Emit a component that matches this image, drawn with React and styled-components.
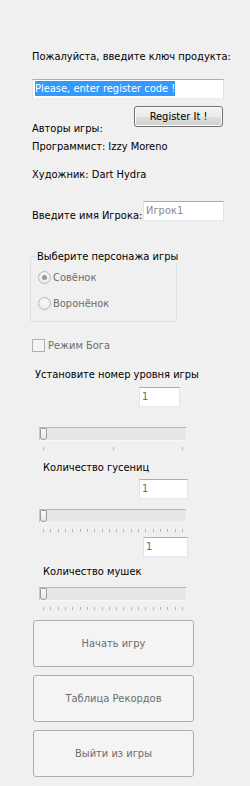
import React from 'react';
import styled, { createGlobalStyle } from 'styled-components';

const GlobalStyle = createGlobalStyle`
    html, body {
        margin: 0;
        padding: 0;
        background: #f0f0f0;
    }
    * {
        box-sizing: border-box;
    }
`;

const px = (v) => (typeof v === 'number' ? `${v}px` : v || 0);

const Form = styled.div`
    width: 250px;
    height: 786px;
    background: #f0f0f0;
    display: flex;
    flex-direction: column;
    font-family: "DejaVu Sans Condensed", "DejaVu Sans", sans-serif;
    font-stretch: condensed;
    font-size: 11px;
    color: #000;
    overflow: hidden;
`;

const Label = styled.div`
    height: 13px;
    line-height: 13px;
    white-space: nowrap;
    margin-top: ${props => px(props.$mt)};
    margin-left: ${props => px(props.$ml)};
    color: ${props => (props.$disabled ? '#6d6d6d' : '#000')};
`;

const TextBox = styled.div`
    height: 20px;
    width: ${props => px(props.$w)};
    margin-top: ${props => px(props.$mt)};
    margin-left: ${props => px(props.$ml)};
    background: #fff;
    border: 1px solid #e2e3ea;
    border-top-color: #abadb3;
    border-bottom-color: #e3e9ef;
    line-height: 17px;
    padding: 0 2px;
    color: ${props => props.$color || '#6d6d6d'};
    white-space: nowrap;
    overflow: hidden;
`;

const Selected = styled.span`
    background: #3399ff;
    color: #fff;
    display: inline-block;
    line-height: 15px;
    margin-top: 1px;
`;

const Row = styled.div`
    display: flex;
    align-items: flex-start;
    margin-top: ${props => px(props.$mt)};
    margin-left: ${props => px(props.$ml)};
    width: ${props => px(props.$w)};
`;

const PushButton = styled.button`
    margin-left: auto;
    width: 89px;
    height: 21px;
    padding: 0;
    font: inherit;
    color: #000;
    border: 1px solid #707070;
    border-radius: 3px;
    background: linear-gradient(to bottom, #f2f2f2 0%, #ebebeb 50%, #dddddd 51%, #cfcfcf 100%);
    box-shadow: inset 0 0 0 1px #fcfcfc;
`;

const GroupBox = styled.fieldset`
    margin: 28px 0 0 30px;
    width: 147px;
    min-width: 0;
    height: 72px;
    padding: 0 0 0 7px;
    border: 1px solid #d5dfe5;
    border-radius: 3px;
    display: flex;
    flex-direction: column;
`;

const Legend = styled.legend`
    padding: 0;
    margin-left: -1px;
    height: 13px;
    line-height: 13px;
    white-space: nowrap;
`;

const OptionRow = styled.label`
    display: flex;
    align-items: center;
    height: 13px;
    line-height: 13px;
    margin-top: ${props => px(props.$mt)};
    color: #6d6d6d;
    gap: 2px;
`;

const RadioCircle = styled.span`
    width: 13px;
    height: 13px;
    flex: none;
    border-radius: 50%;
    border: 1px solid #b8b8b8;
    background: radial-gradient(circle at 50% 40%, #fafafa 0%, #e6e6e6 100%);
    display: flex;
    align-items: center;
    justify-content: center;
    &::after {
        content: '';
        width: 5px;
        height: 5px;
        border-radius: 50%;
        background: ${props => (props.$checked ? '#9a9a9a' : 'transparent')};
    }
`;

const CheckRow = styled.label`
    display: flex;
    align-items: center;
    gap: 3px;
    margin: 17px 0 0 32px;
    height: 13px;
    color: #6d6d6d;
`;

const CheckBox = styled.span`
    width: 13px;
    height: 13px;
    border: 1px solid #b1b1b1;
    background: #f4f4f4;
`;

const Slider = styled.div`
    margin-top: ${props => px(props.$mt)};
    margin-left: 39px;
    width: 148px;
    display: flex;
    flex-direction: column;
`;

const Track = styled.div`
    position: relative;
    height: 14px;
    background: #e7e7e7;
    border-top: 1px solid #b9b9b9;
    border-left: 1px solid #c9c9c9;
    border-bottom: 1px solid #f8f8f8;
    border-right: 1px solid #f8f8f8;
`;

const Thumb = styled.span`
    position: absolute;
    left: 0;
    top: 0;
    width: 7px;
    height: 12px;
    background: linear-gradient(to bottom, #fdfdfd, #e6e6e6);
    border: 1px solid #9a9a9a;
    border-radius: 1px 1px 3px 3px;
`;

const Ticks = styled.div`
    display: flex;
    justify-content: space-between;
    margin: 6px 4px 0 4px;
    height: 3px;
`;

const Tick = styled.span`
    width: 1px;
    height: 3px;
    background: #b5b5b5;
`;

const BigButton = styled.button`
    margin: ${props => px(props.$mt)} 0 0 33px;
    width: 161px;
    height: 47px;
    padding: 0;
    font: inherit;
    color: #6d6d6d;
    background: #f4f4f4;
    border: 1px solid #adadad;
    border-radius: 3px;
`;

const TrackBar = ({ mt, ticks }) => (
    <Slider $mt={mt}>
        <Track>
            <Thumb />
        </Track>
        <Ticks>
            {Array.from({ length: ticks }).map((_, i) => <Tick key={i} />)}
        </Ticks>
    </Slider>
);

export default function App() {
    return (
        <>
            <GlobalStyle />
            <Form>
                <Label $mt={50} $ml={32}>Пожалуйста, введите ключ продукта:</Label>
                <TextBox $mt={16} $ml={32} $w={192} $color="#000">
                    <Selected>Please, enter register code !</Selected>
                </TextBox>
                <Row $mt={7} $ml={32} $w={191}>
                    <Label $mt={16}>Авторы игры:</Label>
                    <PushButton>Register It !</PushButton>
                </Row>
                <Label $mt={5} $ml={32}>Программист: Izzy Moreno</Label>
                <Label $mt={15} $ml={32}>Художник: Dart Hydra</Label>
                <Row $mt={20} $ml={32} $w={192}>
                    <Label $mt={8}>Введите имя Игрока:</Label>
                    <TextBox $w={81} $ml="auto" $color="#8a8a8a">Игрок1</TextBox>
                </Row>
                <GroupBox>
                    <Legend>Выберите персонажа игры</Legend>
                    <OptionRow $mt={8}>
                        <RadioCircle $checked />
                        Совёнок
                    </OptionRow>
                    <OptionRow $mt={13}>
                        <RadioCircle />
                        Воронёнок
                    </OptionRow>
                </GroupBox>
                <CheckRow>
                    <CheckBox />
                    Режим Бога
                </CheckRow>
                <Label $mt={16} $ml={35}>Установите номер уровня игры</Label>
                <TextBox $mt={6} $ml={139} $w={41}>1</TextBox>
                <TrackBar mt={20} ticks={3} />
                <Label $mt={11} $ml={43}>Количество гусениц</Label>
                <TextBox $mt={5} $ml={139} $w={49}>1</TextBox>
                <TrackBar mt={10} ticks={20} />
                <TextBox $mt={5} $ml={143} $w={45}>1</TextBox>
                <Label $mt={8} $ml={43}>Количество мушек</Label>
                <TrackBar mt={9} ticks={20} />
                <BigButton $mt={10}>Начать игру</BigButton>
                <BigButton $mt={8}>Таблица Рекордов</BigButton>
                <BigButton $mt={8}>Выйти из игры</BigButton>
            </Form>
        </>
    );
}
